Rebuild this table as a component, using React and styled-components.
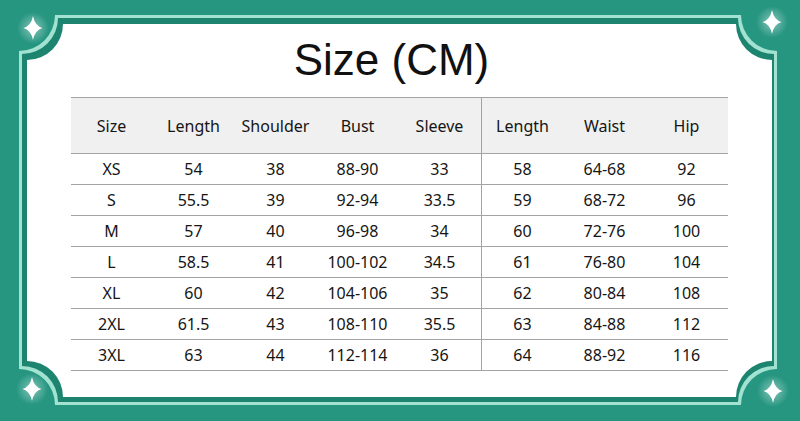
import React from 'react';
import styled, { createGlobalStyle } from 'styled-components';

const HEADERS = ['Size', 'Length', 'Shoulder', 'Bust', 'Sleeve', 'Length', 'Waist', 'Hip'];

const ROWS = [
    ['XS', '54', '38', '88-90', '33', '58', '64-68', '92'],
    ['S', '55.5', '39', '92-94', '33.5', '59', '68-72', '96'],
    ['M', '57', '40', '96-98', '34', '60', '72-76', '100'],
    ['L', '58.5', '41', '100-102', '34.5', '61', '76-80', '104'],
    ['XL', '60', '42', '104-106', '35', '62', '80-84', '108'],
    ['2XL', '61.5', '43', '108-110', '35.5', '63', '84-88', '112'],
    ['3XL', '63', '44', '112-114', '36', '64', '88-92', '116'],
];

// the split between top measurements and bottom measurements
const SPLIT_AFTER = 4;

const GlobalStyle = createGlobalStyle`
    html, body {
        margin: 0;
        padding: 0;
        background: #269681;
    }
`;

const Root = styled.div`
    position: relative;
    width: 800px;
    height: 421px;
    overflow: hidden;
    background: #269681;
`;

const FrameArt = styled.svg`
    position: absolute;
    inset: 0;
    z-index: 0;
`;

const Content = styled.div`
    position: relative;
    z-index: 1;
    display: flex;
    flex-direction: column;
    align-items: center;
    padding-top: 38px;
    padding-right: 2px;
`;

const Title = styled.h1`
    margin: 0 0 15px;
    padding-right: 15px;
    font-family: "Liberation Sans", Arial, sans-serif;
    font-weight: 400;
    font-size: 44px;
    line-height: 44px;
    color: #111;
`;

const Table = styled.table`
    width: 656px;
    table-layout: fixed;
    border-collapse: collapse;
    font-family: "Noto Sans", "Open Sans", sans-serif;
    font-size: 16px;
    color: #151515;
`;

const HeadRow = styled.tr`
    background: #f0f0f0;
    border-top: 1px solid #a3a3a3;
    border-bottom: 1px solid #a3a3a3;
`;

const Row = styled.tr`
    border-bottom: 1px solid #a3a3a3;
`;

const Cell = styled.td`
    width: 82px;
    height: ${(p) => (p.$head ? '55px' : '30px')};
    padding: 0;
    text-align: center;
    vertical-align: middle;
    border-right: ${(p) => (p.$split ? '1px solid #a3a3a3' : 'none')};
`;

const corner = (x0, y0, x1, y1, r) => [
    `M${x0 + r},${y0}`,
    `H${x1 - r}`,
    `A${r},${r} 0 0 0 ${x1},${y0 + r}`,
    `V${y1 - r}`,
    `A${r},${r} 0 0 0 ${x1 - r},${y1}`,
    `H${x0 + r}`,
    `A${r},${r} 0 0 0 ${x0},${y1 - r}`,
    `V${y0 + r}`,
    `A${r},${r} 0 0 0 ${x0 + r},${y0}`,
    'Z',
].join(' ');

const Sparkle = ({ x, y }) => (
    <g transform={`translate(${x} ${y})`}>
        <circle r="16" fill="url(#glow)" />
        <path d="M0,-12 Q2,-2 9.5,0 Q2,2 0,12 Q-2,2 -9.5,0 Q-2,-2 0,-12 Z" fill="#fff" />
    </g>
);

const Frame = () => (
    <FrameArt width="800" height="421" viewBox="0 0 800 421">
        <defs>
            <radialGradient id="glow">
                <stop offset="0" stopColor="#ffffff" stopOpacity="0.45" />
                <stop offset="1" stopColor="#ffffff" stopOpacity="0" />
            </radialGradient>
        </defs>
        <path d={corner(19, 15, 777, 405, 36)} fill="#a2e2d1" />
        <path d={corner(22, 18, 774, 402, 36)} fill="#1c846f" />
        <path d={corner(27, 24, 772, 397, 36)} fill="#fff" />
        <Sparkle x={33} y={28} />
        <Sparkle x={772} y={22} />
        <Sparkle x={32} y={389} />
        <Sparkle x={773} y={391} />
    </FrameArt>
);

const App = () => (
    <Root>
        <GlobalStyle />
        <Frame />
        <Content>
            <Title>Size (CM)</Title>
            <Table>
                <tbody>
                    <HeadRow>
                        {HEADERS.map((h, i) => (
                            <Cell key={i} $head $split={i === SPLIT_AFTER}>{h}</Cell>
                        ))}
                    </HeadRow>
                    {ROWS.map((row) => (
                        <Row key={row[0]}>
                            {row.map((v, i) => (
                                <Cell key={i} $split={i === SPLIT_AFTER}>{v}</Cell>
                            ))}
                        </Row>
                    ))}
                </tbody>
            </Table>
        </Content>
    </Root>
);

export default App;
